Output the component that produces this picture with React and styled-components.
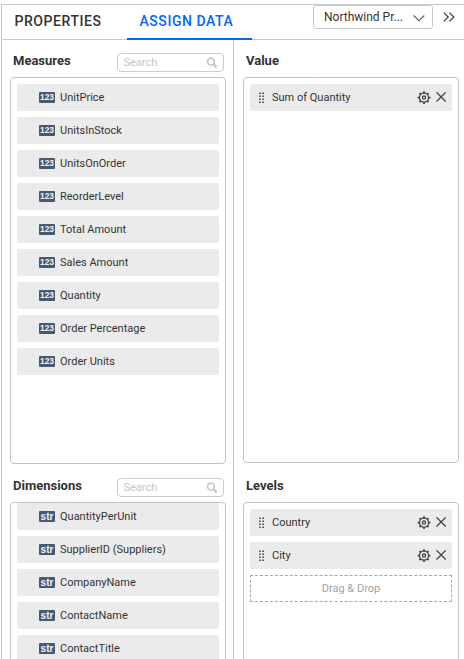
import React from 'react';
import styled, { createGlobalStyle } from 'styled-components';

const GlobalStyle = createGlobalStyle`
  * { box-sizing: border-box; }
  body { margin: 0; background: #fff; overflow: hidden; }
`;

const Page = styled.div`
  height: 659px;
  padding: 4px 0 0 1px;
  overflow: hidden;
  font-family: Roboto, sans-serif;
  color: #333;
`;

const Shell = styled.div`
  height: 655px;
  border-top: 1px solid #c8c8c8;
  border-left: 1px solid #c8c8c8;
`;

const Header = styled.header`
  display: flex;
  align-items: flex-start;
  height: 35px;
  border-bottom: 1px solid #c8c8c8;
`;

const Tab = styled.div`
  width: ${(p) => p.$width}px;
  height: 35px;
  padding-left: ${(p) => p.$inset}px;
  font-size: 14px;
  font-weight: 500;
  line-height: 32px;
  letter-spacing: ${(p) => p.$spacing}px;
  white-space: nowrap;
  color: ${(p) => (p.$active ? '#0565ff' : '#333')};
  border-bottom: 2px solid ${(p) => (p.$active ? '#0565ff' : 'transparent')};
`;

const SourceSelect = styled.div`
  display: flex;
  align-items: center;
  justify-content: space-between;
  width: 120px;
  height: 24px;
  margin-left: 61px;
  padding: 0 7px 0 10px;
  border: 1px solid #c8c8c8;
  border-radius: 3px;
  font-size: 12px;
  line-height: 22px;
  white-space: nowrap;

  svg { margin-top: 2px; }
`;

const ExpandButton = styled.div`
  display: flex;
  margin: 7px 0 0 10px;
`;

const Columns = styled.div`
  display: grid;
  grid-template-columns: 232px 1fr;
  height: 619px;
`;

const Column = styled.div`
  display: flex;
  flex-direction: column;
  padding: 0 ${(p) => (p.$divided ? 7 : 5)}px 0 ${(p) => (p.$divided ? 8 : 9)}px;
  border-right: ${(p) => (p.$divided ? '1px solid #c8c8c8' : 'none')};
`;

const SectionHead = styled.div`
  display: flex;
  justify-content: space-between;
  align-items: flex-start;
  flex: none;
  height: ${(p) => p.$height}px;
  padding: ${(p) => p.$top}px 2px 0 3px;
`;

const Title = styled.h2`
  margin: 0;
  font-size: 13px;
  font-weight: 700;
  line-height: 16px;
`;

const Search = styled.div`
  display: flex;
  justify-content: space-between;
  align-items: center;
  width: 107px;
  height: 19px;
  padding: 0 5px 0 5.5px;
  border: 1px solid #cbcbcb;
  border-radius: 4px;
  color: #c5c5c5;
  font-size: 11px;
  line-height: 17px;
`;

const Panel = styled.div`
  display: flex;
  flex-direction: column;
  flex: none;
  gap: 6px;
  width: 216px;
  height: ${(p) => p.$height}px;
  padding: ${(p) => p.$top ?? 6}px 6px 0;
  overflow: hidden;
  border: 1px solid #c4c4c4;
  border-radius: 4px;
`;

const Row = styled.div`
  display: flex;
  align-items: center;
  flex: none;
  height: 27px;
  padding-left: ${(p) => p.$inset}px;
  padding-right: 5px;
  border-radius: 2px;
  background: #ebebeb;
  font-size: 11px;
  white-space: nowrap;
`;

const TypeBadge = styled.span`
  display: flex;
  justify-content: center;
  align-items: center;
  width: 16px;
  height: 11px;
  margin-right: 5px;
  border-radius: 1px;
  background: #475872;
  color: #f4f4f4;
  font-family: 'Liberation Sans', sans-serif;
  font-size: ${(p) => (p.$text ? 10 : 8.4)}px;
  font-weight: 700;
  line-height: ${(p) => (p.$text ? 10 : 11)}px;
`;

const RowLabel = styled.span`
  flex: 1;
`;

const Grip = styled.svg`
  flex: none;
  margin-right: 7px;
`;

const RowActions = styled.span`
  display: flex;
  align-items: center;
  gap: 5px;
`;

const DropZone = styled.div`
  flex: none;
  height: 27px;
  border: 1px dashed #a6a6a6;
  color: #a3a3a3;
  font-size: 11px;
  line-height: 25px;
  text-align: center;
`;

function SearchBox() {
  return (
    <Search>
      Search
      <svg width="12" height="13" viewBox="0 0 12 13" fill="none" stroke="#c8c8c8">
        <circle cx="5" cy="5.6" r="3.4" strokeWidth="1.7" />
        <path d="M7.4 8.1L10.6 11.3" strokeWidth="2.4" />
      </svg>
    </Search>
  );
}

function FieldRow({ type, name }) {
  return (
    <Row $inset={22}>
      <TypeBadge $text={type === 'str'}>{type}</TypeBadge>
      <RowLabel>{name}</RowLabel>
    </Row>
  );
}

const teeth = [0, 45, 90, 135, 180, 225, 270, 315];

function AssignedRow({ name }) {
  return (
    <Row $inset={8}>
      <Grip width="7" height="12" viewBox="0 0 7 12" fill="#555">
        {[0, 3, 6, 9].map((y) => (
          <React.Fragment key={y}>
            <rect x="1" y={y + 0.5} width="1.8" height="1.5" />
            <rect x="4.2" y={y + 0.5} width="1.8" height="1.5" />
          </React.Fragment>
        ))}
      </Grip>
      <RowLabel>{name}</RowLabel>
      <RowActions>
        <svg width="14" height="14" viewBox="0 0 14 14" fill="none" stroke="#444">
          <circle cx="7" cy="6.6" r="4.6" strokeWidth="1.3" />
          <circle cx="7" cy="6.6" r="1.6" strokeWidth="1.3" />
          {teeth.map((a) => (
            <path key={a} d="M7 2V0.2" strokeWidth="1.7" transform={`rotate(${a} 7 6.6)`} />
          ))}
        </svg>
        <svg width="11" height="11" viewBox="0 0 11 11" fill="none" stroke="#444" strokeWidth="1.3">
          <path d="M0.5 0.3L9.7 9.5M9.7 0.3L0.5 9.5" />
        </svg>
      </RowActions>
    </Row>
  );
}

const measures = [
  'UnitPrice', 'UnitsInStock', 'UnitsOnOrder', 'ReorderLevel', 'Total Amount',
  'Sales Amount', 'Quantity', 'Order Percentage', 'Order Units',
];
const dimensions = [
  'QuantityPerUnit', 'SupplierID (Suppliers)', 'CompanyName', 'ContactName', 'ContactTitle',
];

export default function App() {
  return (
    <>
      <GlobalStyle />
      <Page>
        <Shell>
          <Header>
            <Tab $width={125} $inset={12.5} $spacing={0.55}>PROPERTIES</Tab>
            <Tab $width={125} $inset={12.5} $spacing={0.55} $active>ASSIGN DATA</Tab>
            <SourceSelect>
              Northwind Pr...
              <svg width="12" height="8" viewBox="0 0 12 8" fill="none" stroke="#555" strokeWidth="1.1">
                <path d="M0.7 1.5L6 6.8L11.3 1.5" />
              </svg>
            </SourceSelect>
            <ExpandButton>
              <svg width="12" height="10" viewBox="0 0 12 10" fill="none" stroke="#444" strokeWidth="1.3">
                <path d="M0.8 0.6L5.2 5L0.8 9.4M6.4 0.6L10.8 5L6.4 9.4" />
              </svg>
            </ExpandButton>
          </Header>
          <Columns>
            <Column $divided>
              <SectionHead $height={37} $top={13}>
                <Title>Measures</Title>
                <SearchBox />
              </SectionHead>
              <Panel $height={387}>
                {measures.map((name) => <FieldRow key={name} type="123" name={name} />)}
              </Panel>
              <SectionHead $height={38} $top={14}>
                <Title>Dimensions</Title>
                <SearchBox />
              </SectionHead>
              <Panel $height={170} $top={0}>
                {dimensions.map((name) => <FieldRow key={name} type="str" name={name} />)}
              </Panel>
            </Column>
            <Column>
              <SectionHead $height={37} $top={13}>
                <Title>Value</Title>
              </SectionHead>
              <Panel $height={386}>
                <AssignedRow name="Sum of Quantity" />
              </Panel>
              <SectionHead $height={39} $top={15}>
                <Title>Levels</Title>
              </SectionHead>
              <Panel $height={170}>
                <AssignedRow name="Country" />
                <AssignedRow name="City" />
                <DropZone>Drag &amp; Drop</DropZone>
              </Panel>
            </Column>
          </Columns>
        </Shell>
      </Page>
    </>
  );
}
